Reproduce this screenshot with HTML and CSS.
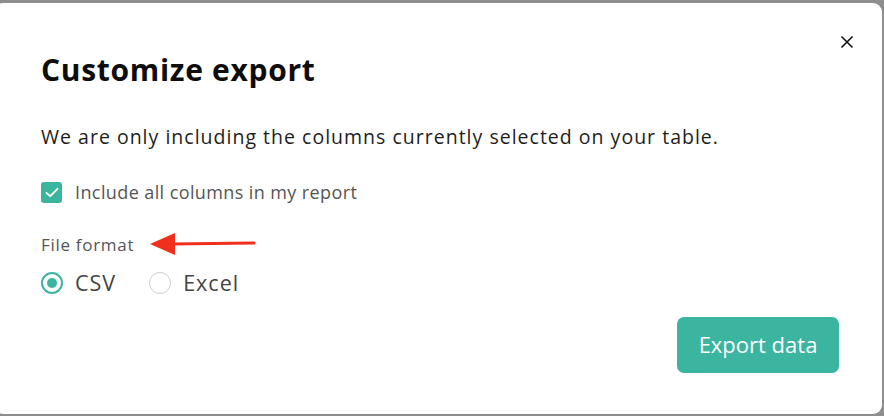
FILE: index.html
```html
<!DOCTYPE html>
<html lang="en">
<head>
<meta charset="utf-8">
<title>Customize export</title>
<link rel="stylesheet" href="styles.css">
</head>
<body>
<div class="modal">
  <button class="close" aria-label="Close">
    <svg width="14" height="14" viewBox="0 0 14 14"><path d="M1.5 1.5 L12.5 12.5 M12.5 1.5 L1.5 12.5" stroke="#111" stroke-width="1.6" fill="none"/></svg>
  </button>
  <h1 class="title">Customize export</h1>
  <p class="desc">We are only including the columns currently selected on your table.</p>
  <label class="check">
    <span class="box"><svg width="14" height="11" viewBox="0 0 14 11"><path d="M1.5 5.8 L5.2 9.2 L12.5 1.8" stroke="#fff" stroke-width="1.8" fill="none" stroke-linecap="round" stroke-linejoin="round"/></svg></span>
    <span class="check-label">Include all columns in my report</span>
  </label>
  <div class="format-row">
    <span class="format-label">File format</span>
    <svg class="arrow" width="106" height="24" viewBox="0 0 106 24"><path d="M0 12 L25 1 L25 23 Z" fill="#f0301c"/><path d="M22 12 L104 11" stroke="#f0301c" stroke-width="3.2" stroke-linecap="round"/></svg>
  </div>
  <div class="radios">
    <label class="radio"><span class="dot on"></span><span>CSV</span></label>
    <label class="radio"><span class="dot"></span><span>Excel</span></label>
  </div>
  <div class="actions">
    <button class="export">Export data</button>
  </div>
</div>
</body>
</html>
```
FILE: styles.css
```css
html, body {
  margin: 0;
  padding: 0;
  height: 100%;
}
body {
  background: #8e8e8e;
  font-family: "Open Sans", Lato, sans-serif;
  overflow: hidden;
}
.modal {
  position: relative;
  background: #fff;
  margin: 3px 2px 0 -6px;
  height: 411px;
  border-radius: 9px;
  box-sizing: border-box;
  padding: 42px 0 0 47px;
  display: flex;
  flex-direction: column;
}
.close {
  position: absolute;
  top: 32px;
  right: 28px;
  border: 0;
  background: none;
  padding: 0;
  width: 14px;
  height: 14px;
  display: flex;
}
.title {
  margin: 0;
  font-size: 30px;
  font-weight: 700;
  color: #0d0d0d;
  line-height: 50px;
  letter-spacing: 0.7px;
}
.desc {
  margin: 30px 0 0;
  font-size: 19.5px;
  line-height: 24px;
  color: #1e1e1e;
  letter-spacing: 1.01px;
}
.check {
  display: flex;
  align-items: center;
  gap: 13px;
  margin-top: 31px;
}
.box {
  width: 21px;
  height: 21px;
  background: #3bb5a0;
  border-radius: 3px;
  display: flex;
  align-items: center;
  justify-content: center;
}
.check-label {
  font-size: 18px;
  color: #555;
  letter-spacing: 0.4px;
}
.format-row {
  display: flex;
  align-items: center;
  gap: 16px;
  margin-top: 28px;
  height: 24px;
}
.format-label {
  font-size: 17px;
  color: #555;
  letter-spacing: 0.7px;
}
.radios {
  display: flex;
  gap: 33px;
  margin-top: 12px;
}
.radio {
  display: flex;
  align-items: center;
  gap: 12px;
  font-size: 21.5px;
  color: #444;
  letter-spacing: 1px;
}
.dot {
  width: 22px;
  height: 22px;
  border-radius: 50%;
  border: 1px solid #cfcfcf;
  box-sizing: border-box;
  display: flex;
  align-items: center;
  justify-content: center;
}
.dot.on {
  border: 2px solid #3bb5a0;
}
.dot.on::after {
  content: "";
  width: 10px;
  height: 10px;
  border-radius: 50%;
  background: #3bb5a0;
}
.actions {
  display: flex;
  justify-content: flex-end;
  padding-right: 43px;
  margin-top: 20px;
}
.export {
  width: 162px;
  height: 56px;
  border: 0;
  border-radius: 7px;
  background: #3bb5a0;
  color: #fff;
  font-family: inherit;
  font-size: 22px;
  padding-bottom: 3px;
}
```
